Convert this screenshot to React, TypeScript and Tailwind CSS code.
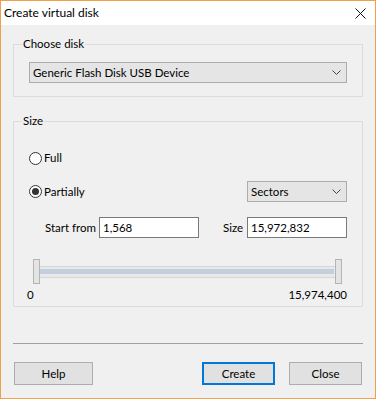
import React from "react";

const font = { fontFamily: 'Lato, "Noto Sans", sans-serif' };

function Chevron() {
  return (
    <svg width="9" height="5" viewBox="0 0 9 5" className="text-[#444]">
      <path d="M0.5 0.5 L4.5 4.5 L8.5 0.5" fill="none" stroke="currentColor" strokeWidth="1" />
    </svg>
  );
}

function Select({ value, className = "" }: { value: string; className?: string }) {
  return (
    <div
      className={`flex h-[21px] items-center justify-between border border-[#adadad] bg-[#e5e5e5] pl-[3px] pr-[5px] ${className}`}
    >
      <span className="leading-[16px]">{value}</span>
      <Chevron />
    </div>
  );
}

function Radio({ checked, label }: { checked?: boolean; label: string }) {
  return (
    <div className="flex items-center">
      <span className="flex h-[13px] w-[13px] items-center justify-center rounded-full border border-[#333] bg-white">
        {checked && <span className="h-[7px] w-[7px] rounded-full bg-[#333]" />}
      </span>
      <span className="ml-[2px] leading-[16px]">{label}</span>
    </div>
  );
}

function Input({ value }: { value: string }) {
  return (
    <div className="flex h-[21px] w-[100px] items-center border border-[#7a7a7a] bg-white pl-[3px] leading-[16px]">
      {value}
    </div>
  );
}

function Button({ label, primary, className = "" }: { label: string; primary?: boolean; className?: string }) {
  return (
    <button
      className={`flex h-[23px] items-center justify-center bg-[#e1e1e1] leading-[16px] ${
        primary ? "border-2 border-[#0078d7]" : "border border-[#adadad]"
      } ${className}`}
    >
      {label}
    </button>
  );
}

function Thumb() {
  return <div className="h-[25px] w-[7px] border border-[#b4b4b4] bg-[#e4e4e4]" />;
}

export default function App() {
  return (
    <div
      className="flex h-[399px] w-[376px] flex-col border border-[#f0a048] bg-[#f0f0f0] text-[11.5px] text-black"
      style={font}
    >
      {/* title bar */}
      <div className="flex h-[24px] shrink-0 items-center justify-between bg-white pl-[3px] pr-[9px]">
        <span className="text-[12px] leading-[16px]">Create virtual disk</span>
        <svg width="11" height="11" viewBox="0 0 11 11">
          <path d="M0.5 0.5 L10.5 10.5 M10.5 0.5 L0.5 10.5" stroke="#111" strokeWidth="1" />
        </svg>
      </div>

      {/* choose disk */}
      <fieldset className="mx-[12px] mt-[11px] w-[350px] border border-[#dcdcdc] pb-[13px]">
        <legend className="ml-[8px] px-[1px] leading-[16px]">Choose disk</legend>
        <Select value="Generic Flash Disk USB Device" className="mx-[15px] mt-[10px]" />
      </fieldset>

      {/* size */}
      <fieldset className="mx-[12px] mt-[16px] w-[350px] border border-[#dcdcdc] pb-[3px]">
        <legend className="ml-[8px] px-[1px] leading-[16px]">Size</legend>

        <div className="ml-[15px] mt-[21px]">
          <Radio label="Full" />
        </div>

        <div className="ml-[15px] mr-[15px] mt-[15px] flex h-[21px] items-center justify-between">
          <Radio checked label="Partially" />
          <Select value="Sectors" className="w-[100px]" />
        </div>

        <div className="ml-[31px] mr-[15px] mt-[15px] flex items-center">
          <span className="w-[54px] leading-[16px]">Start from</span>
          <Input value="1,568" />
          <span className="ml-auto w-[24px] leading-[16px]">Size</span>
          <Input value="15,972,832" />
        </div>

        <div className="ml-[19px] mr-[20px] mt-[21px] flex items-center">
          <Thumb />
          <div className="flex h-[12px] flex-1 flex-col justify-center border-y border-[#d6d6d6] bg-[#e9e9e9]">
            <div className="mr-[1px] h-[5px] bg-[#c3cfdd]" />
          </div>
          <Thumb />
        </div>

        <div className="ml-[13px] mr-[15px] mt-[3px] flex justify-between leading-[16px]">
          <span>0</span>
          <span>15,974,400</span>
        </div>
      </fieldset>

      <div className="mx-[12px] mt-[36px] h-px w-[350px] bg-[#a0a0a0]" />

      <div className="mt-[18px] flex pl-[13px]">
        <Button label="Help" className="w-[79px]" />
        <Button label="Create" primary className="ml-[109px] w-[73px]" />
        <Button label="Close" className="ml-[14px] w-[73px]" />
      </div>
    </div>
  );
}
